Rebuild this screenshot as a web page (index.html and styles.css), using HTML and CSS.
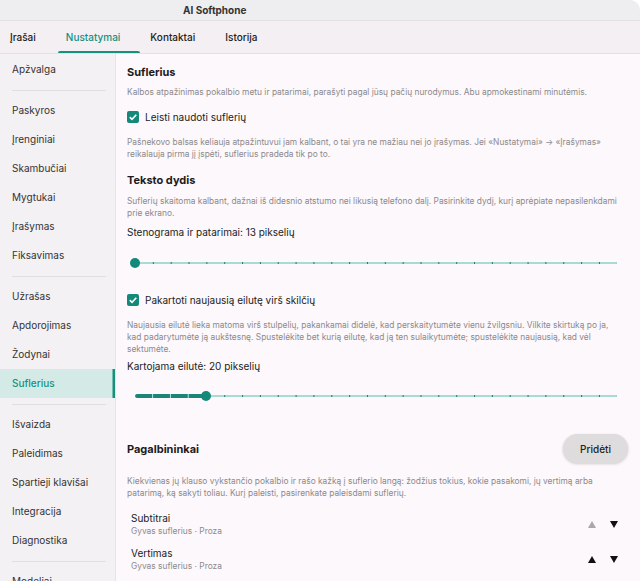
FILE: index.html
```html
<!DOCTYPE html>
<html lang="lt">
<head>
    <meta charset="UTF-8">
    <meta name="viewport" content="width=device-width, initial-scale=1.0">
    <title>AI Softphone</title>
    <link rel="stylesheet" href="styles.css">
</head>
<body>
<div class="window">
    <header class="titlebar">AI Softphone</header>

    <nav class="tabs">
        <span class="tab">Įrašai</span>
        <span class="tab active">Nustatymai</span>
        <span class="tab">Kontaktai</span>
        <span class="tab">Istorija</span>
    </nav>

    <div class="main">
        <aside class="sidebar">
            <div class="nav-item">Apžvalga</div>
            <div class="nav-sep"></div>
            <div class="nav-item">Paskyros</div>
            <div class="nav-item">Įrenginiai</div>
            <div class="nav-item">Skambučiai</div>
            <div class="nav-item">Mygtukai</div>
            <div class="nav-item">Įrašymas</div>
            <div class="nav-item">Fiksavimas</div>
            <div class="nav-sep"></div>
            <div class="nav-item">Užrašas</div>
            <div class="nav-item">Apdorojimas</div>
            <div class="nav-item">Žodynai</div>
            <div class="nav-item active">Suflerius</div>
            <div class="nav-sep"></div>
            <div class="nav-item">Išvaizda</div>
            <div class="nav-item">Paleidimas</div>
            <div class="nav-item">Spartieji klavišai</div>
            <div class="nav-item">Integracija</div>
            <div class="nav-item">Diagnostika</div>
            <div class="nav-sep"></div>
            <div class="nav-item">Modeliai</div>
        </aside>

        <section class="content">
            <h3 class="heading">Suflerius</h3>
            <p class="desc">Kalbos atpažinimas pokalbio metu ir patarimai, parašyti pagal jūsų pačių nurodymus. Abu apmokestinami minutėmis.</p>

            <label class="check-row">
                <span class="checkbox">
                    <svg width="10" height="10" viewBox="0 0 10 10"><path d="M1.8 5.2 L4 7.3 L8.3 2.8" fill="none" stroke="#fff" stroke-width="1.6"/></svg>
                </span>
                Leisti naudoti suflerių
            </label>
            <p class="desc desc-after-check">Pašnekovo balsas keliauja atpažintuvui jam kalbant, o tai yra ne mažiau nei jo įrašymas. Jei «Nustatymai» → «Įrašymas» reikalauja pirma jį įspėti, suflerius pradeda tik po to.</p>

            <h3 class="heading heading-sub">Teksto dydis</h3>
            <p class="desc">Suflerių skaitoma kalbant, dažnai iš didesnio atstumo nei likusią telefono dalį. Pasirinkite dydį, kurį aprėpiate nepasilenkdami prie ekrano.</p>
            <div class="value-label">Stenograma ir patarimai: 13 pikselių</div>
            <div class="slider">
                <div class="track">
                    <div class="thumb" style="left: 0%"></div>
                </div>
            </div>

            <label class="check-row check-row-sub">
                <span class="checkbox">
                    <svg width="10" height="10" viewBox="0 0 10 10"><path d="M1.8 5.2 L4 7.3 L8.3 2.8" fill="none" stroke="#fff" stroke-width="1.6"/></svg>
                </span>
                Pakartoti naujausią eilutę virš skilčių
            </label>
            <p class="desc desc-after-check">Naujausia eilutė lieka matoma virš stulpelių, pakankamai didelė, kad perskaitytumėte vienu žvilgsniu. Vilkite skirtuką po ja, kad padarytumėte ją aukštesnę. Spustelėkite bet kurią eilutę, kad ją ten sulaikytumėte; spustelėkite naujausią, kad vėl sektumėte.</p>
            <div class="value-label value-label-tight">Kartojama eilutė: 20 pikselių</div>
            <div class="slider slider-tight">
                <div class="track">
                    <div class="fill" style="width: 14.8%"></div>
                    <div class="thumb" style="left: 14.8%"></div>
                </div>
            </div>

            <div class="section-head">
                <h3 class="heading">Pagalbininkai</h3>
                <button class="btn-add">Pridėti</button>
            </div>
            <p class="desc">Kiekvienas jų klauso vykstančio pokalbio ir rašo kažką į suflerio langą: žodžius tokius, kokie pasakomi, jų vertimą arba patarimą, ką sakyti toliau. Kurį paleisti, pasirenkate paleisdami suflerių.</p>

            <div class="helper-list">
                <div class="helper">
                    <div class="helper-text">
                        <div class="helper-name">Subtitrai</div>
                        <div class="helper-meta">Gyvas suflerius · Proza</div>
                    </div>
                    <span class="arrow disabled"><svg width="8" height="7" viewBox="0 0 8 7"><path d="M4 0 L8 7 L0 7 Z"/></svg></span>
                    <span class="arrow"><svg width="8" height="7" viewBox="0 0 8 7"><path d="M0 0 L8 0 L4 7 Z"/></svg></span>
                </div>
                <div class="helper">
                    <div class="helper-text">
                        <div class="helper-name">Vertimas</div>
                        <div class="helper-meta">Gyvas suflerius · Proza</div>
                    </div>
                    <span class="arrow"><svg width="8" height="7" viewBox="0 0 8 7"><path d="M4 0 L8 7 L0 7 Z"/></svg></span>
                    <span class="arrow"><svg width="8" height="7" viewBox="0 0 8 7"><path d="M0 0 L8 0 L4 7 Z"/></svg></span>
                </div>
            </div>
        </section>
    </div>
</div>
</body>
</html>
```

FILE: styles.css
```css
* {
    box-sizing: border-box;
}

body {
    margin: 0;
    background-color: #ffffff;
    font-family: Inter, "Noto Sans", sans-serif;
    color: #222;
}

.window {
    width: 640px;
    height: 581px;
    display: flex;
    flex-direction: column;
    overflow: hidden;
    background-color: #fcf8fb;
    border-top-right-radius: 10px;
}

/* title bar + tabs */

.titlebar {
    height: 21px;
    flex: none;
    padding-left: 183px;
    background-color: #eeeef0;
    border-bottom: 1px solid #e4dfe3;
    font-size: 10px;
    font-weight: 700;
    line-height: 20px;
    color: #333;
}

.tabs {
    height: 33px;
    flex: none;
    display: flex;
    gap: 30px;
    padding-left: 10px;
    background-color: #f4eff3;
    border-bottom: 1px solid #e4dfe3;
}

.tab {
    position: relative;
    font-size: 10px;
    font-weight: 500;
    line-height: 32px;
    color: #222;
}

.tab.active {
    color: #16917f;
}

.tab.active::after {
    content: "";
    position: absolute;
    left: -8px;
    right: -20px;
    bottom: 0;
    height: 2.5px;
    background-color: #16917f;
    border-radius: 2px 2px 0 0;
}

.main {
    flex: 1;
    display: flex;
    min-height: 0;
}

/* sidebar */

.sidebar {
    width: 116px;
    flex: none;
    padding-top: 1px;
    background-color: #f4f1f4;
    border-right: 1px solid #e6e2e5;
}

.nav-item {
    height: 29px;
    padding-left: 12px;
    font-size: 10px;
    line-height: 29px;
    color: #333;
    white-space: nowrap;
}

.nav-item.active {
    background-color: #d4eae6;
    color: #16917f;
    font-weight: 500;
    box-shadow: inset -2.5px 0 0 #16917f;
}

.nav-sep {
    height: 12px;
    margin: 0 9px 0 12px;
    background: linear-gradient(#e2dde1, #e2dde1) center / 100% 1px no-repeat;
}

/* content */

.content {
    flex: 1;
    min-width: 0;
    padding: 10px 12px 0 11px;
    overflow: hidden;
}

.heading {
    margin: 0;
    font-size: 11px;
    font-weight: 700;
    line-height: 16px;
    color: #1d1b1d;
}

.heading-sub {
    margin-top: 12px;
}

.desc {
    margin: 5px 0 0;
    padding-right: 8px;
    font-size: 8.4px;
    line-height: 12px;
    color: #8d898c;
}

.check-row {
    display: flex;
    align-items: center;
    gap: 6px;
    height: 16px;
    margin-top: 11px;
    font-size: 10px;
    color: #222;
}

.check-row-sub {
    margin-top: 19px;
}

.checkbox {
    width: 12px;
    height: 12px;
    display: flex;
    align-items: center;
    justify-content: center;
    background-color: #13897a;
    border-radius: 2px;
}

.desc-after-check {
    margin-top: 11px;
}

.heading + .desc {
    margin-top: 6px;
}

.heading-sub + .desc {
    margin-top: 7px;
}

.value-label {
    margin-top: 6px;
    font-size: 10px;
    line-height: 14px;
    color: #222;
}

.value-label-tight {
    margin-top: 4px;
}

.slider {
    height: 20px;
    margin: 14px 11px 0 8px;
    display: flex;
    align-items: center;
}

.slider-tight {
    margin-top: 13px;
}

.track {
    position: relative;
    flex: 1;
    height: 2px;
    border-radius: 1px;
    background-color: #a9dad3;
    background-image: linear-gradient(to right, #1d7c70 1.4px, transparent 1.4px);
    background-size: calc(100% / 27) 2px;
    background-repeat: repeat-x;
}

.fill {
    position: absolute;
    left: 0;
    top: -1px;
    height: 4px;
    border-radius: 2px;
    background-color: #1b8677;
    background-image: linear-gradient(to right, #b9e3dc 1.4px, transparent 1.4px);
    background-size: 17.83px 4px;
    background-position: 17.1px 0;
    background-repeat: repeat-x;
}

.thumb {
    position: absolute;
    top: 50%;
    width: 10px;
    height: 10px;
    margin: -5px 0 0 -5px;
    border-radius: 50%;
    background-color: #13897a;
}

.section-head {
    display: flex;
    align-items: center;
    justify-content: space-between;
    margin-top: 28px;
}

.btn-add {
    width: 65px;
    height: 29px;
    border: none;
    border-radius: 15px;
    background-color: #dedcdd;
    box-shadow: 0 1px 3px rgba(0, 0, 0, 0.18);
    font-family: inherit;
    font-size: 10px;
    font-weight: 500;
    color: #222;
}

.section-head + .desc {
    margin-top: 12px;
}

.helper-list {
    margin-top: 8px;
}

.helper {
    display: flex;
    align-items: center;
    gap: 14px;
    padding: 4.5px 10px 4.5px 4px;
}

.helper-text {
    flex: 1;
}

.helper-name {
    font-size: 10px;
    line-height: 13px;
    color: #222;
}

.helper-meta {
    font-size: 8.4px;
    line-height: 13px;
    color: #8d898c;
}

.arrow {
    display: flex;
    fill: #111;
}

.arrow.disabled {
    fill: #a9a7a8;
}
```
